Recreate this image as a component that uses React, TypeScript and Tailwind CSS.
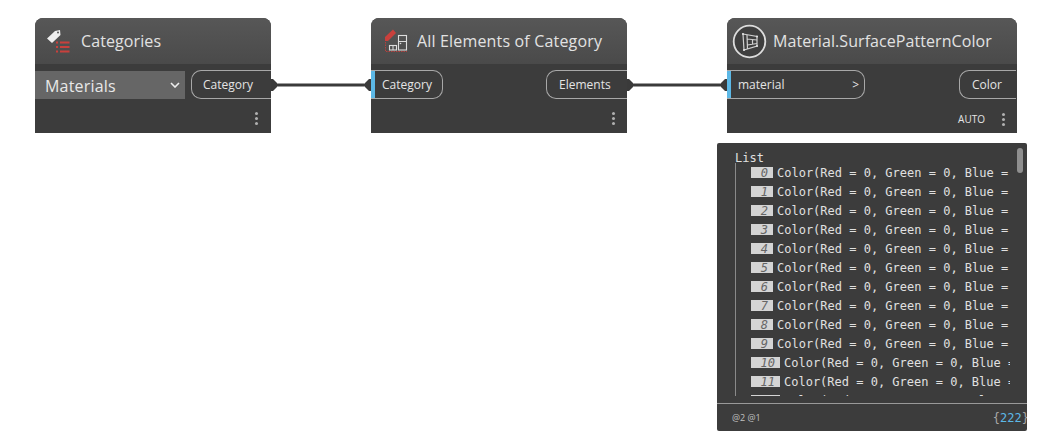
import React from 'react';

const uiFont = "font-['Open_Sans','Noto_Sans',sans-serif]";

const rows = ['0', '1', '2', '3', '4', '5', '6', '7', '8', '9', '10', '11', '12'];

const CategoriesIcon = () => (
  <svg width="30" height="30" viewBox="0 0 30 30" className="shrink-0">
    <path d="M2 12.5 L10 5 L15 4 L15.5 9 L7 17 Z" fill="#eeeeee" />
    <circle cx="13" cy="6.5" r="1" fill="#555555" />
    <g fill="#c9403c">
      <rect x="11" y="15.5" width="2" height="2" />
      <rect x="11" y="20" width="2" height="2" />
      <rect x="11" y="24.5" width="2" height="2" />
      <rect x="15" y="15.5" width="9.5" height="2" />
      <rect x="15" y="20" width="9.5" height="2" />
      <rect x="15" y="24.5" width="9.5" height="2" />
    </g>
  </svg>
);

const ElementsIcon = () => (
  <svg width="26" height="28" viewBox="0 0 26 28" className="shrink-0">
    <path d="M2 10 L10 2.5 L13 6 L5 14 L2 14 Z" fill="#c9403c" />
    <path d="M2.5 15 V24.5 H24" fill="none" stroke="#b5403d" strokeWidth="1" strokeDasharray="1.5 1" />
    <rect x="6.5" y="18.5" width="7" height="4.5" fill="none" stroke="#dddddd" strokeWidth="1.1" />
    <path d="M10 18.5 V23" stroke="#dddddd" strokeWidth="1" />
    <rect x="15.5" y="8.5" width="8" height="14.5" fill="none" stroke="#dddddd" strokeWidth="1.1" />
    <path d="M15.5 14.5 H23.5" stroke="#dddddd" strokeWidth="1" />
    <circle cx="17.5" cy="16.5" r="0.8" fill="#dddddd" />
  </svg>
);

const MaterialIcon = () => (
  <svg width="35" height="35" viewBox="0 0 35 35" className="shrink-0">
    <circle cx="17.5" cy="17.5" r="15.8" fill="#3f3f3f" stroke="#dcdcdc" strokeWidth="1.8" />
    <g fill="none" stroke="#d0d0d0" strokeWidth="1.2">
      <path d="M11 10 L25 12.5 L25 22 L12 26 Z" />
      <path d="M15 11 L15.5 25 M15 15 L25 16 M15.5 21 L25 19.5 M20.5 15.5 V20" />
    </g>
    <g fill="#e0e0e0">
      <circle cx="11" cy="10" r="1.1" />
      <circle cx="25" cy="12.5" r="1.1" />
      <circle cx="25" cy="22" r="1.1" />
      <circle cx="12" cy="26" r="1.1" />
    </g>
  </svg>
);

const Dots = () => (
  <span className="flex flex-col gap-[2px]">
    <span className="w-[3px] h-[3px] rounded-full bg-[#b0b0b0]" />
    <span className="w-[3px] h-[3px] rounded-full bg-[#b0b0b0]" />
    <span className="w-[3px] h-[3px] rounded-full bg-[#b0b0b0]" />
  </span>
);

const OutPort = ({ label, width }: { label: string; width: string }) => (
  <div className={`${width} h-[29px] flex items-center border border-r-0 border-[#a8a8a8] rounded-l-[10px] text-[12px] text-[#e4e4e4]`}>
    {label}
  </div>
);

const InPort = ({ label, width, arrow }: { label: string; width: string; arrow?: boolean }) => (
  <div className={`${width} h-[29px] flex items-center justify-between border border-l-0 border-[#a8a8a8] rounded-r-[10px] text-[12px] text-[#e4e4e4] overflow-hidden`}>
    <div className="flex items-center h-full">
      <span className="w-[4px] h-full bg-[#5cb8e6]" />
      <span className="pl-[7px]">{label}</span>
    </div>
    {arrow && <span className="pr-[5px] text-[12px]">&gt;</span>}
  </div>
);

const Wire = ({ left, width }: { left: string; width: string }) => (
  <svg className={`absolute top-[78px] ${left} ${width} h-[14px]`} viewBox="0 0 100 14" preserveAspectRatio="none">
    <rect x="0" y="5.5" width="100" height="3" fill="#3a3a3a" />
  </svg>
);

const Cap = ({ left, flip }: { left: string; flip?: boolean }) => (
  <svg className={`absolute top-[79px] ${left} w-[6px] h-[12px] ${flip ? 'rotate-180' : ''}`} viewBox="0 0 6 12">
    <path d="M0 0 H2 L6 4 V8 L2 12 H0 Z" fill="#3a3a3a" />
  </svg>
);

const App: React.FC = () => {
  return (
    <div className={`relative w-[1052px] h-[442px] bg-white overflow-hidden ${uiFont}`}>
      {/* Wires */}
      <Wire left="left-[276px]" width="w-[91px]" />
      <Wire left="left-[632px]" width="w-[91px]" />
      <Cap left="left-[271px]" />
      <Cap left="left-[365px]" flip />
      <Cap left="left-[627px]" />
      <Cap left="left-[721px]" flip />

      {/* Categories */}
      <div className="absolute left-[35px] top-[18px] w-[236px] h-[115px] flex flex-col bg-[#3c3c3c] rounded-t-[8px] overflow-hidden">
        <div className="h-[46px] shrink-0 flex items-center pl-[10px] gap-[6px] bg-gradient-to-b from-[#575757] to-[#4a4a4a]">
          <CategoriesIcon />
          <span className="text-[16px] tracking-[0.1px] text-[#e2e2e2]">Categories</span>
        </div>
        <div className="flex items-center mt-[6px]">
          <div className="w-[150px] h-[28px] bg-[#666666] flex items-center justify-between pl-[10px] pr-[5px] text-[16px] tracking-[0.2px] text-[#e8e8e8]">
            <span className="pt-[2px]">Materials</span>
            <svg width="10" height="6" viewBox="0 0 10 6">
              <path d="M1 1 L5 5 L9 1" fill="none" stroke="#eeeeee" strokeWidth="1.6" />
            </svg>
          </div>
          <div className="ml-auto">
            <OutPort label="Category" width="w-[80px] pl-[11px]" />
          </div>
        </div>
        <div className="flex justify-end items-center pr-[13px] mt-[13px]">
          <Dots />
        </div>
      </div>

      {/* All Elements of Category */}
      <div className="absolute left-[371px] top-[18px] w-[256px] h-[115px] flex flex-col bg-[#3c3c3c] rounded-t-[8px] overflow-hidden">
        <div className="h-[46px] shrink-0 flex items-center pl-[12px] gap-[8px] bg-gradient-to-b from-[#575757] to-[#4a4a4a]">
          <ElementsIcon />
          <span className="text-[16px] tracking-[0.17px] text-[#e2e2e2]">All Elements of Category</span>
        </div>
        <div className="flex items-center justify-between mt-[6px]">
          <InPort label="Category" width="w-[72px]" />
          <OutPort label="Elements" width="w-[81px] pl-[12px]" />
        </div>
        <div className="flex justify-end items-center pr-[12px] mt-[13px]">
          <Dots />
        </div>
      </div>

      {/* Material.SurfacePatternColor */}
      <div className="absolute left-[727px] top-[18px] w-[290px] h-[115px] flex flex-col bg-[#3c3c3c] rounded-t-[8px] overflow-hidden">
        <div className="h-[46px] shrink-0 flex items-center pl-[5px] gap-[6px] bg-gradient-to-b from-[#575757] to-[#4a4a4a]">
          <MaterialIcon />
          <span className="text-[16px] tracking-[0.07px] text-[#e2e2e2]">Material.SurfacePatternColor</span>
        </div>
        <div className="flex items-center justify-between mt-[6px] pr-[1px]">
          <InPort label="material" width="w-[138px]" arrow />
          <OutPort label="Color" width="w-[57px] pl-[12px]" />
        </div>
        <div className="flex justify-end items-center pr-[12px] mt-[13px] gap-[17px]">
          <span className="text-[10px] text-[#e4e4e4]">AUTO</span>
          <Dots />
        </div>
      </div>

      {/* Preview */}
      <div className="absolute left-[717px] top-[143px] w-[310px] h-[288px] flex flex-col bg-[#3c3c3c] rounded-[2px] overflow-hidden font-['DejaVu_Sans_Mono','Liberation_Mono',monospace] text-[12px] text-[#e0e0e0]">
        <div className="relative flex-1 min-h-0 overflow-hidden pl-[18px] pt-[8px]">
          <div className="h-[14px] leading-[14px]">List</div>
          <div className="border-l border-[#8a8a8a] h-[233px] -mt-[2px] pl-[15px] overflow-hidden">
            {rows.map((row) => (
              <div key={row} className="h-[19px] flex items-center gap-[4px] whitespace-nowrap">
                <span className={`${row.length > 1 ? 'w-[29px]' : 'w-[22px]'} h-[11px] shrink-0 flex items-center justify-end pr-[5px] bg-[#d4d4d4] italic text-[12px] text-[#666666]`}>
                  {row}
                </span>
                <span className={row.length > 1 ? 'w-[226px] overflow-hidden' : 'w-[233px] overflow-hidden'}>
                  Color(Red = 0, Green = 0, Blue = 0, Alpha = 0)
                </span>
              </div>
            ))}
          </div>
          <div className="absolute right-[4px] top-[5px] w-[6px] h-[25px] rounded-full bg-[#8f8f8f]" />
        </div>
        <div className="h-[28px] shrink-0 flex items-center justify-between border-t border-[#999999] pl-[15px] -mr-[2px]">
          <span className={`text-[9px] text-[#c0c0c0] ${uiFont}`}>@2 @1</span>
          <span className="text-[12px] text-[#a8a8a8]">
            {'{'}<span className="text-[#5cb8e6]">222</span>{'}'}
          </span>
        </div>
      </div>
    </div>
  );
};

export default App;
